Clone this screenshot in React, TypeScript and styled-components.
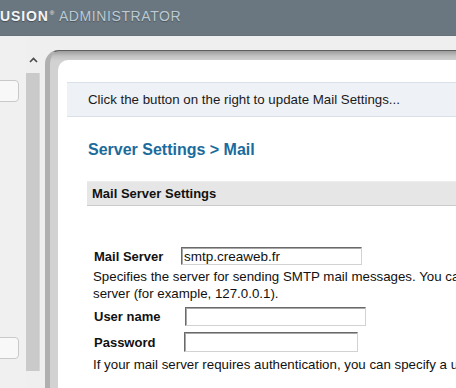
import React from 'react'
import styled, { createGlobalStyle } from 'styled-components'

const GlobalStyle = createGlobalStyle`
  html, body {
    margin: 0;
    padding: 0;
    overflow: hidden;
  }
  body {
    width: 456px;
    height: 388px;
    background: #eeefee;
    font-family: "Liberation Sans", Arial, sans-serif;
    color: #111;
  }
`

const Page = styled.div`
  display: flex;
  flex-direction: column;
  height: 388px;
  overflow: hidden;
`

const Header = styled.div`
  height: 36px;
  box-sizing: border-box;
  padding-top: 5px;
  background: #6b7780;
  border-bottom: 1px solid #66727b;
  font-size: 14px;
  line-height: 16px;
  letter-spacing: 0.6px;
  white-space: nowrap;
`

const Brand = styled.span`
  color: #f4f6f7;
  font-weight: bold;
  letter-spacing: 0.9px;
  text-shadow: 0 1px 1px rgba(0, 0, 0, 0.35);
`

const Reg = styled.span`
  display: inline-block;
  font-size: 6px;
  vertical-align: 6px;
  margin: 0 4px 0 1px;
  color: #f4f6f7;
`

const Product = styled.span`
  color: #bccad2;
  text-shadow: 0 1px 1px rgba(0, 0, 0, 0.3);
`

const Main = styled.div`
  flex: 1;
  display: flex;
  min-height: 0;
  background: #eeefee;
`

const Sidebar = styled.div`
  width: 26px;
  flex: none;
  display: flex;
  flex-direction: column;
  background: #f0f0f0;
  overflow: hidden;
`

const NavButton = styled.div<{ $top: number }>`
  width: 30px;
  height: 22px;
  box-sizing: border-box;
  margin: ${p => p.$top}px 0 0 -11px;
  border: 1px solid #c9c9c9;
  border-radius: 4px;
  background: #f8f8f8;
`

const Scrollbar = styled.div`
  width: 14px;
  flex: none;
  display: flex;
  flex-direction: column;
  align-items: center;
`

const Arrow = styled.svg`
  margin-top: 21px;
  display: block;
`

const Track = styled.div`
  align-self: stretch;
  margin-top: 10px;
  height: 298px;
  background: #cacaca;
  border-right: 1px solid #d6d6d6;
`

const Frame = styled.div`
  flex: none;
  width: 720px;
  margin: 14px 0 0 5px;
  display: flex;
  flex-direction: column;
  padding: 9px 0 0 8px;
  border-top: 1px solid #5f5f5f;
  border-left: 5px solid #b0b0b0;
  border-top-left-radius: 14px;
  background: linear-gradient(to bottom, #9c9c9c 0px, #c2c2c2 5px, #d2d2d2 10px);
`

const Panel = styled.div`
  flex: 1;
  display: flex;
  flex-direction: column;
  background: #fff;
  border-top-left-radius: 10px;
`

const InfoBar = styled.div`
  margin: 22px 0 0 9px;
  height: 35px;
  box-sizing: border-box;
  padding-left: 21px;
  background: #eef1f6;
  border-top: 1px solid #d9e0e8;
  border-bottom: 1px solid #d9e0e8;
  font-size: 13.3px;
  line-height: 33px;
  color: #1a1a1a;
  white-space: nowrap;
`

const Title = styled.h1`
  margin: 24px 0 0 30px;
  font-size: 16px;
  line-height: 18px;
  font-weight: bold;
  color: #1b6b9c;
`

const SectionBar = styled.div`
  margin: 22px 0 0 29px;
  height: 25px;
  box-sizing: border-box;
  padding-left: 5px;
  background: #e6e6e6;
  border-top: 1px solid #ededed;
  border-bottom: 1px solid #cbcbcb;
  font-size: 13px;
  font-weight: bold;
  line-height: 23px;
  color: #111;
`

const Form = styled.div`
  display: flex;
  flex-direction: column;
  padding-left: 36px;
`

const Field = styled.div<{ $label: number; $top: number }>`
  display: grid;
  grid-template-columns: ${p => p.$label}px auto;
  align-items: center;
  justify-content: start;
  margin-top: ${p => p.$top}px;
`

const Label = styled.label`
  font-weight: bold;
  font-size: 13px;
  color: #111;
`

const TextInput = styled.input<{ $w: number; $h: number }>`
  width: ${p => p.$w}px;
  height: ${p => p.$h}px;
  box-sizing: border-box;
  margin: 0;
  padding: 0 2px;
  border: 1px solid;
  border-color: #6a6a6a #d2d2d2 #d2d2d2 #6a6a6a;
  box-shadow: inset 1px 1px 0 #a8a8a8;
  font-family: "Liberation Sans", Arial, sans-serif;
  font-size: 13.5px;
  color: #111;
  background: #fff;
  outline: none;
`

const Note = styled.p<{ $top: number }>`
  margin: ${p => p.$top}px 0 0 -1px;
  font-size: 13.3px;
  line-height: 17px;
  white-space: nowrap;
  color: #111;
`

export default function App() {
  return (
    <>
      <GlobalStyle />
      <Page>
        <Header>
          <Brand>USION</Brand>
          <Reg>®</Reg>
          <Product>ADMINISTRATOR</Product>
        </Header>
        <Main>
          <Sidebar>
            <NavButton $top={44} />
            <NavButton $top={235} />
          </Sidebar>
          <Scrollbar>
            <Arrow width="9" height="6" viewBox="0 0 9 6">
              <path d="M1 5 L4.5 1.5 L8 5" fill="none" stroke="#4a4a4a" strokeWidth="1.6" />
            </Arrow>
            <Track />
          </Scrollbar>
          <Frame>
            <Panel>
              <InfoBar>Click the button on the right to update Mail Settings...</InfoBar>
              <Title>Server Settings &gt; Mail</Title>
              <SectionBar>Mail Server Settings</SectionBar>
              <Form>
                <Field $label={87} $top={41}>
                  <Label>Mail Server</Label>
                  <TextInput $w={181} $h={18} defaultValue="smtp.creaweb.fr" />
                </Field>
                <Note $top={3}>
                  Specifies the server for sending SMTP mail messages. You can specify an Internet address (for example, mail.company.com) or the IP address of the mail
                  <br />
                  server (for example, 127.0.0.1).
                </Note>
                <Field $label={91} $top={5}>
                  <Label>User name</Label>
                  <TextInput $w={181} $h={19} />
                </Field>
                <Field $label={90} $top={6}>
                  <Label>Password</Label>
                  <TextInput type="password" $w={174} $h={20} />
                </Field>
                <Note $top={4}>
                  If your mail server requires authentication, you can specify a user name and password to use.
                </Note>
              </Form>
            </Panel>
          </Frame>
        </Main>
      </Page>
    </>
  )
}
